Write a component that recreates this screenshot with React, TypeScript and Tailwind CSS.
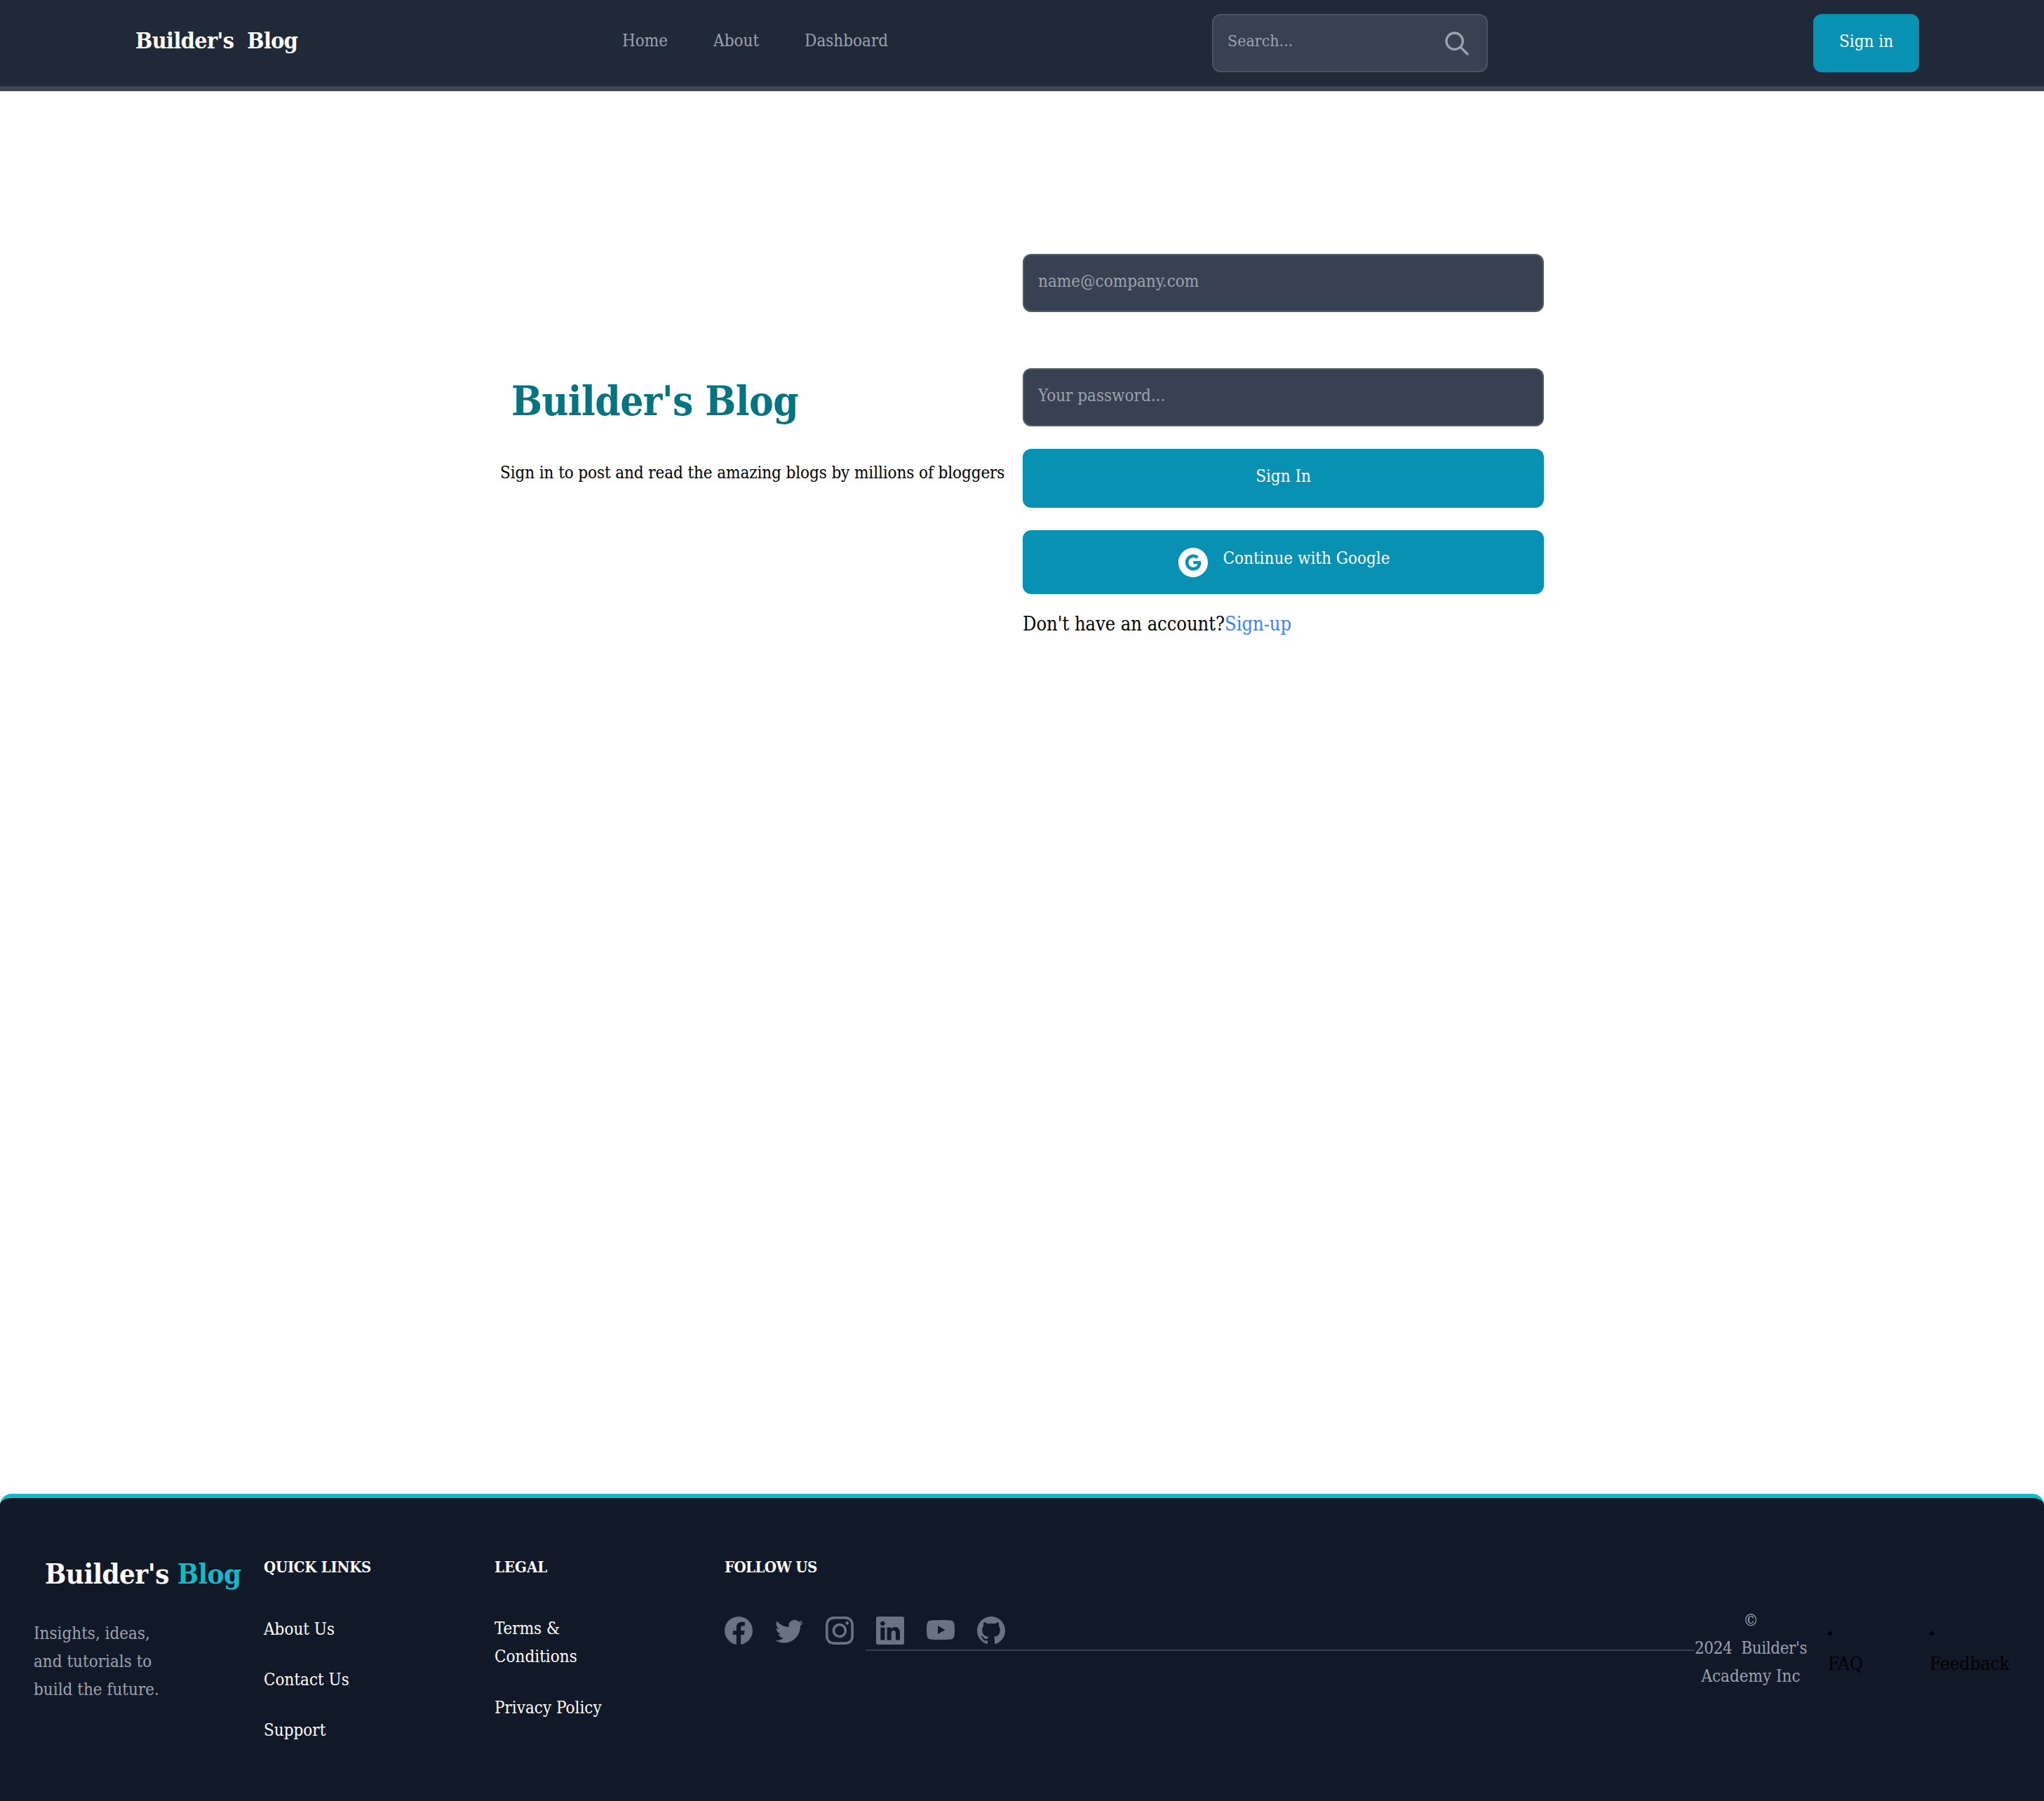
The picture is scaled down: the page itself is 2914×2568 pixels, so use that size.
import { AiFillGoogleCircle } from "react-icons/ai";
import { BsFacebook, BsGithub, BsInstagram, BsLinkedin, BsTwitter, BsYoutube } from "react-icons/bs";
import { HiOutlineSearch } from "react-icons/hi";

const socials = [BsFacebook, BsTwitter, BsInstagram, BsLinkedin, BsYoutube, BsGithub];

function NavBar() {
  return (
    <nav className="flex h-[130px] items-start border-b-[7px] border-[#3d4757] bg-[#1f2937]">
      <a className="ml-[193px] mt-[33px] w-[694px] text-[32px] leading-[50px] font-bold tracking-[-0.6px] text-white">Builder's&nbsp; Blog</a>
      <ul className="mt-[40px] flex w-[841px] gap-[65px] text-[24px] leading-[36px] text-[#9ca3af]">
        <li>Home</li>
        <li>About</li>
        <li>Dashboard</li>
      </ul>
      <div className="mt-[20px] flex h-[83px] w-[393px] items-center rounded-[12px] border-2 border-[#4b5563] bg-[#374151] pl-[20px] pr-[22px]">
        <input className="w-full bg-transparent pb-[7px] text-[23px] outline-none placeholder:text-[#9ca3af]" placeholder="Search..." />
        <HiOutlineSearch className="shrink-0 text-[#9ca3af]" size={40} />
      </div>
      <button className="ml-[464px] mt-[20px] h-[83px] w-[151px] rounded-[12px] bg-[#0891b2] pb-[6px] text-[24px] text-white">Sign in</button>
    </nav>
  );
}

function SignIn() {
  return (
    <main className="flex h-[2000px] justify-center pt-[232px]">
      <div className="w-[745px] pt-[165px]">
        <h1 className="pl-[16px] text-[58px] leading-[90px] font-bold tracking-[-0.6px] text-[#047481]">Builder's Blog</h1>
        <p className="mt-[39px] whitespace-nowrap text-[24px] leading-[36px] tracking-[-0.1px] text-black">Sign in to post and read the amazing blogs by millions of bloggers</p>
      </div>
      <form className="w-[743px]">
        <input className="block h-[83px] w-full rounded-[12px] border-2 border-[#525c6b] bg-[#374151] px-[20px] pb-[5px] text-[24px] placeholder:text-[#9ca3af]" placeholder="name@company.com" />
        <input className="mt-[80px] block h-[83px] w-full rounded-[12px] border-2 border-[#525c6b] bg-[#374151] px-[20px] pb-[5px] text-[24px] placeholder:text-[#9ca3af]" placeholder="Your password..." />
        <button type="button" className="mt-[32px] block h-[84px] w-full rounded-[12px] bg-[#0891b2] pb-[6px] text-[24px] text-white">Sign In</button>
        <button type="button" className="mt-[32px] flex h-[91px] w-full items-center justify-center gap-[18px] rounded-[12px] bg-[#0891b2] text-[24px] text-white">
          <AiFillGoogleCircle size={48} />
          <span className="-mt-[12px]">Continue with Google</span>
        </button>
        <p className="mt-[22px] text-[27px] leading-[42px] text-black">Don't have an account?<a className="text-[#3b82f6]">Sign-up</a></p>
      </form>
    </main>
  );
}

function Footer() {
  return (
    <footer className="flex h-[438px] rounded-t-[16px] border-t-[6px] border-[#14b8c8] bg-[#111827]">
      <div className="ml-[48px] w-[328px] pt-[78px]">
        <div className="pl-[16px] text-[40px] leading-[60px] font-bold tracking-[-0.6px] text-white">Builder's <span className="text-[#14b8c8]">Blog</span></div>
        <p className="mt-[35px] w-[200px] text-[24px] leading-[40px] text-[#9ca3af]">Insights, ideas, and tutorials to build the future.</p>
      </div>
      <div className="w-[329px] pt-[80px]">
        <h4 className="text-[22px] leading-[36px] font-bold tracking-[-0.3px] text-white">QUICK LINKS</h4>
        <ul className="mt-[53px] flex flex-col gap-[36px] text-[24px] leading-[36px] text-white">
          <li>About Us</li>
          <li>Contact Us</li>
          <li>Support</li>
        </ul>
      </div>
      <div className="w-[328px] pt-[80px]">
        <h4 className="text-[22px] leading-[36px] font-bold text-white">LEGAL</h4>
        <ul className="mt-[50px] flex w-[200px] flex-col gap-[33px] text-[24px] leading-[40px] text-white">
          <li>Terms &amp; Conditions</li>
          <li>Privacy Policy</li>
        </ul>
      </div>
      <div className="w-[201px] shrink-0 pt-[80px]">
        <h4 className="whitespace-nowrap text-[22px] leading-[36px] font-bold tracking-[-0.6px] text-white">FOLLOW US</h4>
        <div className="mt-[53px] flex gap-[32px] text-[#6b7280]">
          {socials.map((Icon, i) => (
            <Icon key={i} className="shrink-0" size={40} />
          ))}
        </div>
      </div>
      <hr className="mt-[216px] h-[2px] w-[1182px] border-0 bg-[#374151]" />
      <div className="w-[160px] pt-[154px] text-center text-[24px] leading-[40px] text-[#9ca3af]">
        <p>©</p>
        <p className="whitespace-nowrap tracking-[-0.4px]">2024&nbsp; Builder's</p>
        <p>Academy Inc</p>
      </div>
      <ul className="ml-[30px] flex gap-[95px] pt-[190px] text-[26px] leading-[42px] text-black">
        <li>
          <div className="h-[6px] w-[6px] rounded-full bg-black" />
          <div className="mt-[19px]">FAQ</div>
        </li>
        <li>
          <div className="h-[6px] w-[6px] rounded-full bg-black" />
          <div className="mt-[19px]">Feedback</div>
        </li>
      </ul>
    </footer>
  );
}

export default function App() {
  return (
    <div className="min-h-[2568px] bg-white font-['DejaVu_Serif_Condensed','Liberation_Serif',serif]">
      <NavBar />
      <SignIn />
      <Footer />
    </div>
  );
}
